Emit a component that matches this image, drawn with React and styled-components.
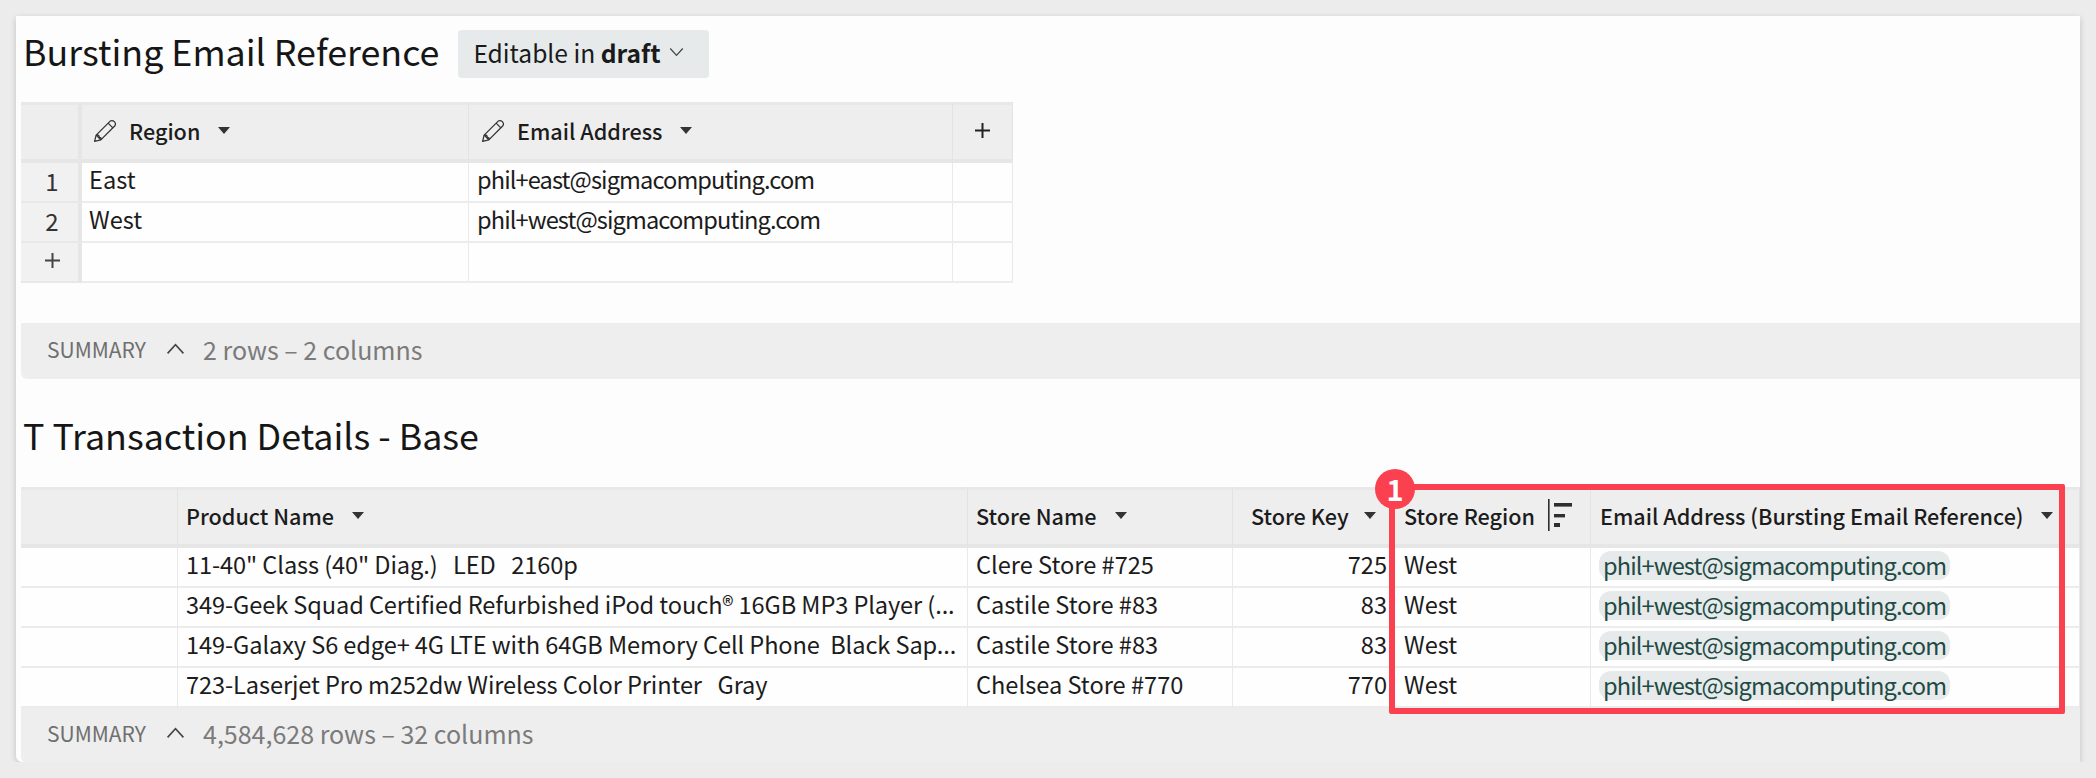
import styled, { createGlobalStyle } from "styled-components";
import { Fragment } from "react";

const GlobalStyle = createGlobalStyle`
  html, body {
    margin: 0;
    padding: 0;
    background: #ececec;
    font-family: "Noto Sans CJK SC", "Open Sans", sans-serif;
    color: #1a1a1a;
  }
`;

const Panel = styled.main`
  margin: 16px 0 0 16px;
  width: 2064px;
  height: 746px;
  box-sizing: border-box;
  padding: 14px 0 0 5px;
  background: #fdfdfd;
  border-bottom-left-radius: 6px;
  box-shadow: 0 2px 6px rgba(0, 0, 0, 0.18);
`;

const TitleRow = styled.div`
  display: flex;
  align-items: center;
  gap: 19px;
  height: 48px;
  padding-left: 2px;
  margin-bottom: ${(p) => p.$gap}px;
`;

const Title = styled.h1`
  margin: 0;
  padding-bottom: 8px;
  font-size: 35.8px;
  font-weight: 400;
  line-height: 40px;
  color: #161616;
`;

const DraftButton = styled.button`
  display: flex;
  align-items: center;
  gap: 8px;
  height: 48px;
  padding: 0 25px 4px 15px;
  border: 0;
  border-radius: 4px;
  background: #e6eaea;
  font: inherit;
  font-size: 24.6px;
  color: #1a1a1a;
  b { font-weight: 700; }
`;

const Sheet = styled.div`
  position: relative;
  display: grid;
  width: ${(p) => p.$width}px;
  grid-template-columns: ${(p) => p.$cols};
  grid-template-rows: 61px repeat(${(p) => p.$rows}, 40px);
  box-sizing: border-box;
`;

const HeadCell = styled.div`
  display: flex;
  align-items: center;
  justify-content: ${(p) => (p.$center ? "center" : "flex-start")};
  min-width: 0;
  padding-left: ${(p) => p.$pad ?? 8}px;
  padding-bottom: 3px;
  background: #eeeeee;
  border-top: 3px solid #e8e8e8;
  border-bottom: 4px solid #e6e6e6;
  border-right: ${(p) => (p.$thick ? "4px solid #e6e6e6" : "1px solid #e3e3e3")};
  box-sizing: border-box;
  font-size: 21.6px;
  font-weight: 500;
  white-space: nowrap;
  color: #1c1c1c;
`;

const Cell = styled.div`
  display: flex;
  align-items: center;
  justify-content: ${(p) => (p.$right ? "flex-end" : "flex-start")};
  min-width: 0;
  padding: 0 ${(p) => (p.$right ? 7 : 0)}px 6px ${(p) => p.$pad ?? 8}px;
  background: #fefefe;
  border-bottom: 2px solid #ececec;
  border-right: 1px solid #e9e9e9;
  box-sizing: border-box;
  font-size: 23.6px;
  letter-spacing: ${(p) => p.$tracking ?? 0}px;
  white-space: nowrap;
  overflow: hidden;
  color: #1c1c1c;
`;

const RowNumber = styled.div`
  display: flex;
  align-items: center;
  justify-content: center;
  padding-left: 5px;
  padding-bottom: 3px;
  background: #f1f1f1;
  border-right: 4px solid #e6e6e6;
  border-bottom: 2px solid #e8e8e8;
  box-sizing: border-box;
  font-size: 24px;
  color: #333333;
`;

const Chip = styled.span`
  display: inline-block;
  height: 29px;
  line-height: 29px;
  padding: 0 4px;
  margin-top: 2px;
  border-radius: 12px;
  background: #e6eaea;
  color: #1f4a45;
`;

const Arrow = styled.i`
  display: inline-block;
  flex: none;
  margin-left: ${(p) => p.$gap ?? 18}px;
  width: 0;
  height: 0;
  border-left: 6.5px solid transparent;
  border-right: 6.5px solid transparent;
  border-top: 7px solid #333333;
`;

const PencilSlot = styled.span`
  display: flex;
  flex: none;
  margin-right: 12px;
`;

const SummaryBar = styled.div`
  display: flex;
  align-items: center;
  height: ${(p) => p.$height}px;
  width: 2059px;
  margin-top: ${(p) => p.$top}px;
  margin-bottom: ${(p) => p.$gap}px;
  padding: 0 0 5px 26px;
  box-sizing: border-box;
  background: #eeeeee;
  border-bottom-left-radius: 6px;
`;

const SummaryLabel = styled.span`
  font-size: 21px;
  color: #6f6f6f;
`;

const SummaryCaret = styled.span`
  display: flex;
  margin-left: 20px;
`;

const SummaryText = styled.span`
  margin-left: 18px;
  font-size: 25px;
  color: #7b7b7b;
`;

const Callout = styled.div`
  position: absolute;
  left: 1368px;
  top: -3px;
  width: 676px;
  height: 230px;
  box-sizing: border-box;
  border: 6px solid #fb4150;
  border-radius: 2px;
  pointer-events: none;
`;

const CalloutBadge = styled.span`
  position: absolute;
  left: -20px;
  top: -21px;
  width: 40px;
  height: 40px;
  border-radius: 50%;
  background: #fb4150;
  color: #ffffff;
  font-size: 29px;
  font-weight: 700;
  line-height: 38px;
  text-align: center;
`;

const Pencil = () => (
  <svg width="24" height="24" viewBox="0 0 23 23" fill="none" stroke="#333" strokeWidth="1.2" strokeLinejoin="round">
    <path d="M1.5 21.5 L3 15.5 L16.5 2 Q18.5 0.8 20.5 2.5 Q22.3 4.5 21 6.5 L7.5 20 Z" />
    <path d="M3 15.5 L7.5 20 M14.5 4 L19 8.5 M3.8 15 Q6 15.5 6.2 17.5 Q8 17.5 8 19.5" />
  </svg>
);

const Chevron = ({ up, size = 15 }) => (
  <svg width={size} height={size * 0.7} viewBox="0 0 12 8" fill="none" stroke="#444" strokeWidth="1">
    <path d={up ? "M1 7 L6 1.5 L11 7" : "M1 1 L6 6.5 L11 1"} />
  </svg>
);

const Plus = ({ color = "#222" }) => (
  <svg width="17" height="17" viewBox="0 0 17 17" stroke={color} strokeWidth="2">
    <path d="M8.5 1 V16 M1 8.5 H16" />
  </svg>
);

const SortIcon = () => (
  <svg width="25" height="33" viewBox="0 0 25 33" fill="#2e2e2e" style={{ marginLeft: 13, flex: "none" }}>
    <rect x="0" y="0" width="1.6" height="32" />
    <rect x="6" y="4" width="18" height="3.6" />
    <rect x="6" y="15" width="11" height="3.4" />
    <rect x="6" y="24" width="6" height="4" />
  </svg>
);

const refRows = [
  ["1", "East", "phil+east@sigmacomputing.com"],
  ["2", "West", "phil+west@sigmacomputing.com"],
];

const transactions = [
  ['11-40" Class (40" Diag.)\u00a0\u00a0\u00a0LED\u00a0\u00a0\u00a02160p', "Clere Store #725", "725"],
  ["349-Geek Squad Certified Refurbished iPod touch® 16GB MP3 Player (...", "Castile Store #83", "83"],
  ["149-Galaxy S6 edge+ 4G LTE with 64GB Memory Cell Phone\u00a0\u00a0Black Sap...", "Castile Store #83", "83"],
  ["723-Laserjet Pro m252dw Wireless Color Printer\u00a0\u00a0\u00a0Gray", "Chelsea Store #770", "770"],
];

const email = "phil+west@sigmacomputing.com";

export default function App() {
  return (
    <>
      <GlobalStyle />
      <Panel>
        <TitleRow $gap={24}>
          <Title>Bursting Email Reference</Title>
          <DraftButton>
            <span>Editable in <b>draft</b></span>
            <Chevron />
          </DraftButton>
        </TitleRow>

        <Sheet $width={992} $cols="61px 387px 484px 60px" $rows={3}>
          <HeadCell $thick />
          <HeadCell $pad={11}>
            <PencilSlot><Pencil /></PencilSlot>Region<Arrow />
          </HeadCell>
          <HeadCell $pad={12}>
            <PencilSlot><Pencil /></PencilSlot>Email Address<Arrow />
          </HeadCell>
          <HeadCell $center $pad={0}><Plus /></HeadCell>

          {refRows.map(([num, region, mail]) => (
            <Fragment key={num}>
              <RowNumber>{num}</RowNumber>
              <Cell $pad={7}>{region}</Cell>
              <Cell $tracking={-0.9}>{mail}</Cell>
              <Cell />
            </Fragment>
          ))}
          <RowNumber><Plus color="#444" /></RowNumber>
          <Cell />
          <Cell />
          <Cell />
        </Sheet>

        <SummaryBar $height={56} $top={40} $gap={35}>
          <SummaryLabel>SUMMARY</SummaryLabel>
          <SummaryCaret><Chevron up size={19} /></SummaryCaret>
          <SummaryText>2 rows – 2 columns</SummaryText>
        </SummaryBar>

        <TitleRow $gap={25}>
          <Title>T Transaction Details - Base</Title>
        </TitleRow>

        <Sheet $width={2059} $cols="157px 790px 265px 162px 196px 489px" $rows={4}>
          <HeadCell />
          <HeadCell $pad={8}>Product Name<Arrow /></HeadCell>
          <HeadCell>Store Name<Arrow /></HeadCell>
          <HeadCell $pad={18}>Store Key<Arrow $gap={15} /></HeadCell>
          <HeadCell $pad={9}>Store Region<SortIcon /></HeadCell>
          <HeadCell $pad={9}>Email Address (Bursting Email Reference)<Arrow $gap={17} /></HeadCell>

          {transactions.map(([product, store, key]) => (
            <Fragment key={product}>
              <Cell />
              <Cell $pad={8} $tracking={-0.1}>{product}</Cell>
              <Cell>{store}</Cell>
              <Cell $right>{key}</Cell>
              <Cell $pad={9}>West</Cell>
              <Cell $pad={8} $tracking={-0.9}><Chip>{email}</Chip></Cell>
            </Fragment>
          ))}

          <Callout>
            <CalloutBadge>1</CalloutBadge>
          </Callout>
        </Sheet>

        <SummaryBar $height={55} $top={0} $gap={0}>
          <SummaryLabel>SUMMARY</SummaryLabel>
          <SummaryCaret><Chevron up size={19} /></SummaryCaret>
          <SummaryText>4,584,628 rows – 32 columns</SummaryText>
        </SummaryBar>
      </Panel>
    </>
  );
}
